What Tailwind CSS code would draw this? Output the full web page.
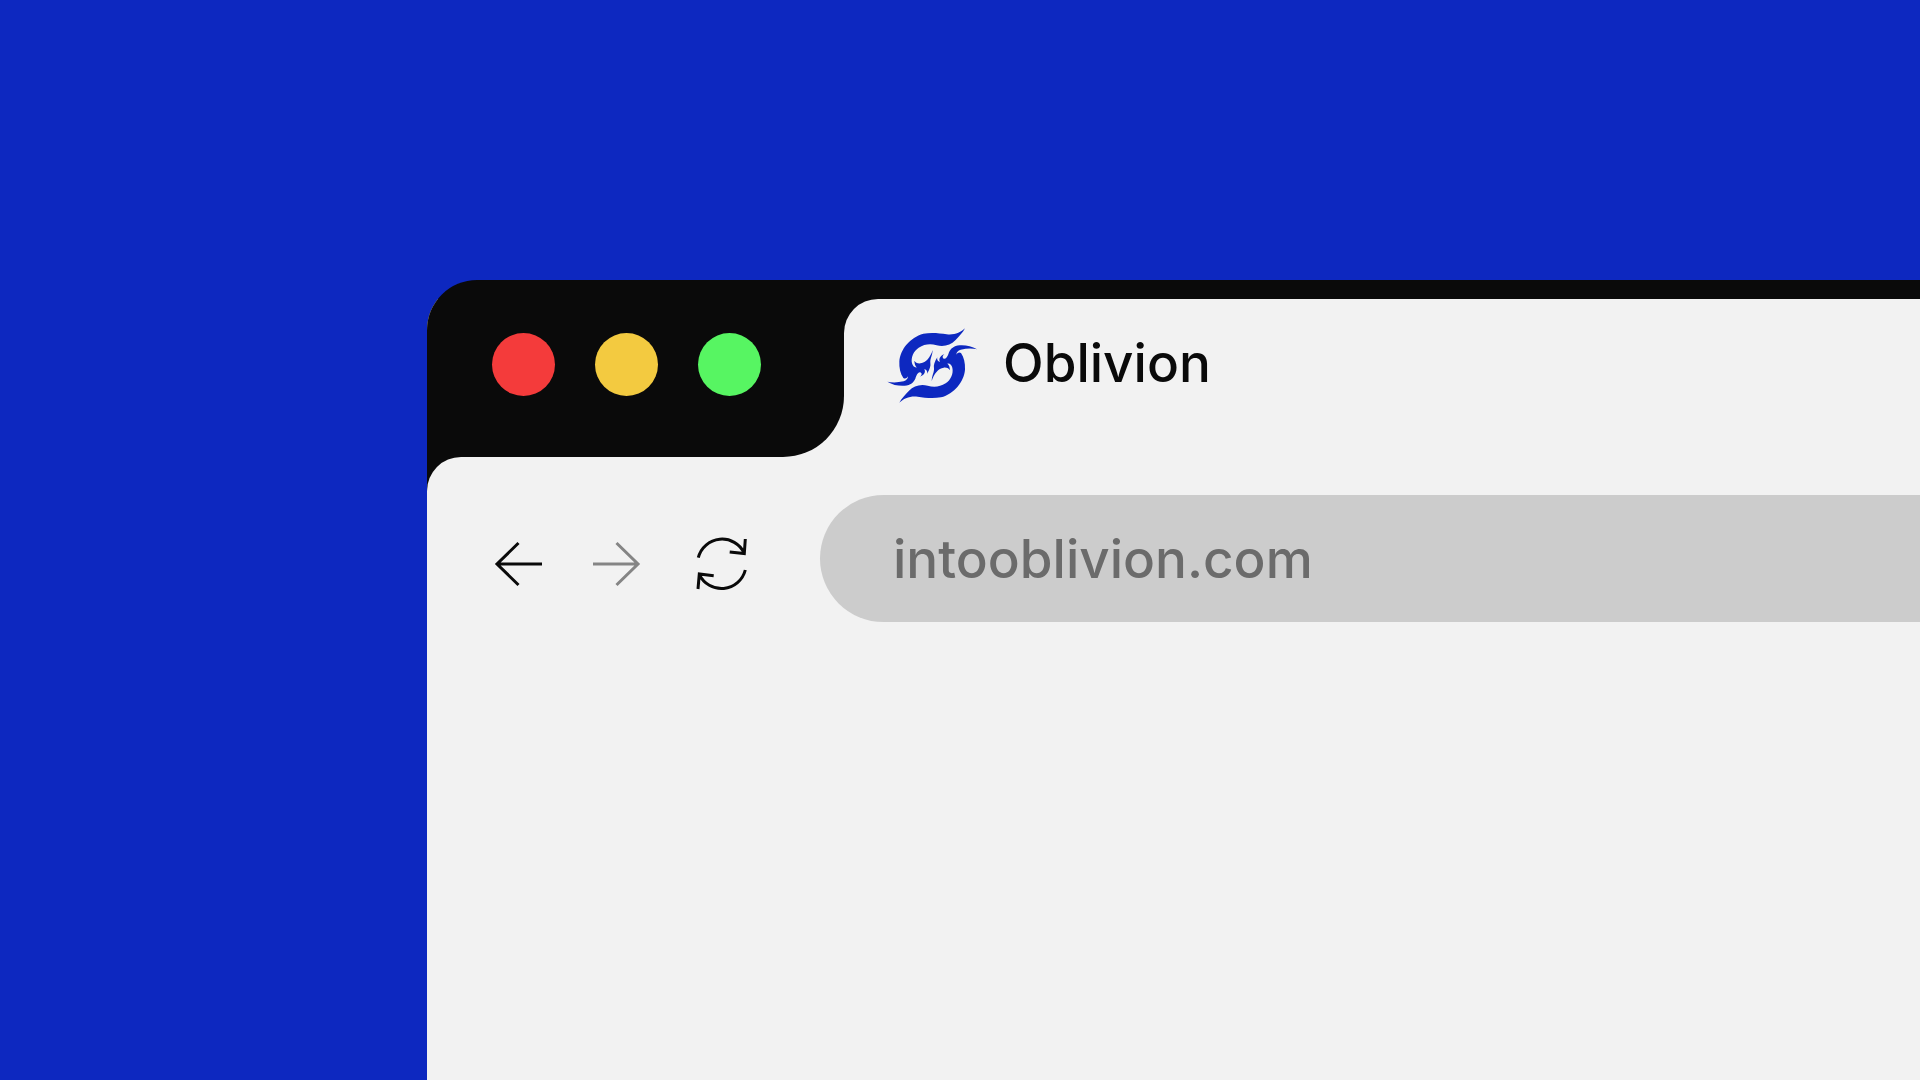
<!DOCTYPE html>
<html lang="en">
<head>
    <meta charset="UTF-8">
    <meta name="viewport" content="width=device-width, initial-scale=1.0">
    <title>Oblivion</title>
    <script src="https://cdn.jsdelivr.net/npm/@tailwindcss/browser@4"></script>
</head>
<body class="bg-[#0d28c0] font-['Inter',sans-serif]">
    <main class="flex flex-col h-screen pt-[280px] pl-[427px] overflow-hidden">
        <div class="flex flex-col grow bg-[#0a0a0a] rounded-tl-[50px] overflow-hidden">
            <!-- tab strip -->
            <header class="flex pt-[19px]">
                <div class="bg-[#f2f2f2]">
                    <div class="flex gap-10 h-[158px] pt-[34px] pl-[65px] pr-[83px] bg-[#0a0a0a] rounded-br-[61px]">
                        <button class="size-[63px] rounded-full bg-[#f43b3b]" aria-label="Close"></button>
                        <button class="size-[63px] rounded-full bg-[#f3ca40]" aria-label="Minimize"></button>
                        <button class="size-[63px] rounded-full bg-[#57f562]" aria-label="Maximize"></button>
                    </div>
                </div>
                <div class="grow pt-[21px] pl-9 bg-[#f2f2f2] rounded-tl-[34px]">
                    <a href="#" class="flex gap-[18px] text-[53px] leading-[86px] font-medium text-[#0a0a0a]">
                        <svg class="w-[105px] h-[90px]" viewBox="0 0 315 270" fill="#0d28c0">
                            <path id="half" d="M255 25 C242 38 222 46 200 43 C178 39 152 37 130 41 C90 52 61 88 58 124 C57 144 61 161 70 174 C76 178 82 174 84 169 C84 176 79 182 71 184 C52 188 36 188 22 185 C38 195 56 198 74 197 C92 195 101 187 106 176 C108 170 110 164 114 160 C117 156 121 155 124 159 C127 163 123 168 120 170 C132 166 138 156 133 147 C140 149 143 154 141 161 C149 148 153 137 151 128 C150 116 157 108 158 90 C151 112 138 128 122 130 C112 131 106 127 103 122 C104 134 106 138 111 142 C104 144 98 138 96 130 C92 112 101 93 116 83 C133 73 150 70 170 76 C192 82 212 75 226 61 C238 49 248 38 255 25 Z" />
                            <use href="#half" transform="rotate(180 156.5 136.5)" />
                        </svg>
                        Oblivion
                    </a>
                </div>
            </header>
            <!-- toolbar and empty page -->
            <section class="grow pt-[38px] bg-[#f2f2f2] rounded-tl-[34px]">
                <nav class="flex items-center pl-16">
                    <div class="flex gap-[46px] pt-2.5 text-[#0a0a0a]">
                        <button aria-label="Back">
                            <svg class="size-14" viewBox="0 0 56 56" fill="none" stroke="currentColor" stroke-width="3"><path d="M51 28H6M27.500 7L6 28L27.500 49" /></svg>
                        </button>
                        <button class="text-[#858585]" aria-label="Forward" disabled>
                            <svg class="size-14" viewBox="0 0 56 56" fill="none" stroke="currentColor" stroke-width="3"><path d="M0 28H45M23.500 7L45 28L23.500 49" /></svg>
                        </button>
                        <button aria-label="Reload">
                            <svg class="size-14" viewBox="0 0 56 56" fill="none" stroke="currentColor" stroke-width="3"><path d="M3.300 21.700A24.500 24.500 0 0 1 49.300 17.300M50.300 3L49.300 17.500L34.700 16M50.300 34A24.500 24.500 0 0 1 4.300 38.300M3 53L4.300 38L18.700 39.700" /></svg>
                        </button>
                    </div>
                    <input type="text" class="grow min-w-0 h-[127px] ml-[69px] pl-[73px] rounded-l-full bg-[#cccccc] text-[53px] font-medium text-[#6b6b6b] outline-none" aria-label="Address" value="intooblivion.com">
                </nav>
            </section>
        </div>
    </main>
</body>
</html>
